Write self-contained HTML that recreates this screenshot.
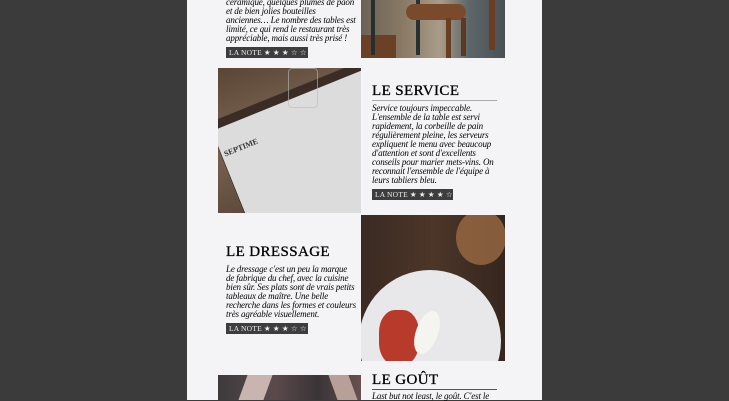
<!DOCTYPE html>
<html><head><meta charset="utf-8"><style>
*{margin:0;padding:0;box-sizing:border-box}
body{width:729px;height:400px;overflow:hidden;background:#3b3b3b;position:relative;font-family:"Liberation Serif",serif}
.page{position:absolute;left:187px;top:0;width:355px;height:400px;background:#f4f4f7}
.img{position:absolute;overflow:hidden}
.t{position:absolute;font-size:9px;line-height:9px;font-style:italic;color:#000;letter-spacing:-0.15px}
h2{position:absolute;font-weight:normal;font-size:15px;color:#000;letter-spacing:0.4px;white-space:nowrap;-webkit-text-stroke:0.3px #000}
.line{position:absolute;height:1px;background:#aaa}
.b{position:absolute;height:11px;background:#3d3d3d;color:#eee;font-size:7.5px;line-height:11px;padding-left:3px;white-space:nowrap;letter-spacing:0.2px}
</style></head><body>
<div class="page"></div>

<div class="img" style="left:361px;top:0;width:144px;height:58px;background:linear-gradient(90deg,#6b6256 0%,#8a7a66 30%,#a99c88 55%,#5d6668 75%,#4a5154 100%)">
<div style="position:absolute;left:0;top:35px;width:35px;height:23px;background:#6a4026"></div>
<div style="position:absolute;left:10px;top:0;width:4px;height:55px;background:#23302f"></div>
<div style="position:absolute;left:55px;top:0;width:4px;height:55px;background:#263232"></div>
<div style="position:absolute;left:45px;top:4px;width:60px;height:16px;background:#7a4a2c;border-radius:8px"></div>
<div style="position:absolute;left:85px;top:18px;width:5px;height:40px;background:#6a3e22"></div>
<div style="position:absolute;left:100px;top:18px;width:5px;height:38px;background:#5e3820"></div>
<div style="position:absolute;left:128px;top:0;width:6px;height:50px;background:#6a3e22"></div>
</div>
<div class="t" style="left:226px;top:-2px;width:130px">céramique, quelques plumes de paon et de bien jolies bouteilles anciennes… Le nombre des tables est limité, ce qui rend le restaurant très appréciable, mais aussi très prisé !</div>
<div class="b" style="left:226px;top:47px;width:82px">LA NOTE ★ ★ ★ ☆ ☆</div>

<div class="img" style="left:218px;top:68px;width:143px;height:145px;background:linear-gradient(160deg,#5a4536 0%,#7a6452 40%,#4e3c30 100%)">
<div style="position:absolute;left:-10px;top:55px;width:190px;height:140px;background:#3b2d26;transform:rotate(-22deg);transform-origin:0 0"></div>
<div style="position:absolute;left:-6px;top:63px;width:185px;height:140px;background:#dcdcdc;transform:rotate(-22deg);transform-origin:0 0"></div>
<div style="position:absolute;left:5px;top:75px;font-size:8px;font-weight:bold;color:#333;transform:rotate(-22deg)">SEPTIME</div>
<div style="position:absolute;left:70px;top:0;width:30px;height:40px;border:1px solid #bbb;border-radius:4px;opacity:.6"></div>
</div>
<h2 style="left:372px;top:83px">LE SERVICE</h2>
<div class="line" style="left:372px;top:100px;width:125px"></div>
<div class="t" style="left:372px;top:104px;width:125px">Service toujours impeccable. L'ensemble de la table est servi rapidement, la corbeille de pain régulièrement pleine, les serveurs expliquent le menu avec beaucoup d'attention et sont d'excellents conseils pour marier mets-vins. On reconnait l'ensemble de l'équipe à leurs tabliers bleu.</div>
<div class="b" style="left:372px;top:189px;width:81px">LA NOTE ★ ★ ★ ★ ☆</div>

<div class="img" style="left:361px;top:215px;width:144px;height:146px;background:linear-gradient(90deg,#3a2a22,#4c3628 50%,#35261e)">
<div style="position:absolute;left:95px;top:-5px;width:50px;height:55px;border-radius:50%;background:#9a6a44;opacity:.8"></div>
<div style="position:absolute;left:-2px;top:55px;width:142px;height:142px;border-radius:50%;background:#e8e8ea"></div>
<div style="position:absolute;left:18px;top:95px;width:40px;height:55px;background:#b83a2a;border-radius:40%"></div>
<div style="position:absolute;left:55px;top:95px;width:22px;height:45px;background:#f4f4f0;border-radius:50%;transform:rotate(20deg)"></div>
</div>
<h2 style="left:226px;top:244px">LE DRESSAGE</h2>
<div class="t" style="left:226px;top:265px;width:130px">Le dressage c'est un peu la marque de fabrique du chef, avec la cuisine bien sûr. Ses plats sont de vrais petits tableaux de maître. Une belle recherche dans les formes et couleurs très agréable visuellement.</div>
<div class="b" style="left:226px;top:323px;width:82px">LA NOTE ★ ★ ★ ☆ ☆</div>

<div class="img" style="left:218px;top:375px;width:143px;height:25px;background:linear-gradient(90deg,#3e3a3c,#5a4a4c 40%,#3a3436 70%,#6a5050)">
<div style="position:absolute;left:25px;top:0;width:25px;height:25px;background:#c9b4b0;transform:skew(-20deg)"></div>
<div style="position:absolute;left:115px;top:0;width:20px;height:25px;background:#b8a098;transform:skew(20deg)"></div>
</div>
<h2 style="left:372px;top:372px">LE GOÛT</h2>
<div class="line" style="left:372px;top:389px;width:125px;background:#555"></div>
<div class="t" style="left:372px;top:392px;width:125px">Last but not least, le goût. C'est le</div>
</body></html>
